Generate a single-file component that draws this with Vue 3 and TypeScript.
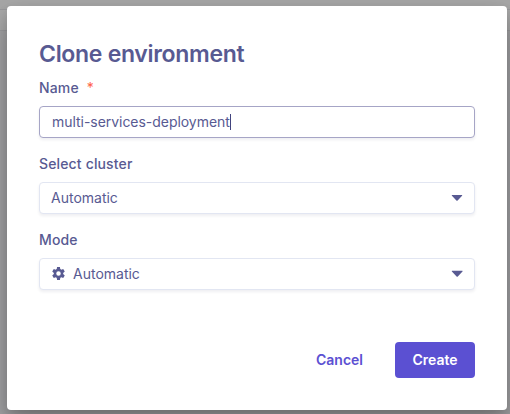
<script setup lang="ts">
import { ref } from 'vue'

const name = ref<string>('multi-services-deployment')
</script>

<template>
  <div class="page">
    <div class="band band-top"></div>
    <div class="band band-bar"></div>
    <div class="overlay">
      <form class="modal" @submit.prevent>
        <h1 class="title">Clone environment</h1>

        <div class="field">
          <div class="label">Name<span class="required">*</span></div>
          <div class="control focused">
            <span class="value">{{ name }}</span><span class="caret"></span>
          </div>
        </div>

        <div class="field">
          <div class="label">Select cluster</div>
          <div class="control select">
            <span class="value">Automatic</span>
            <svg class="arrow" width="12" height="8" viewBox="0 0 12 8">
              <path d="M1.300 1h9.400c.5 0 .7.5.4.8L6.600 6.500c-.3.4-.9.4-1.200 0L.9 1.800C.6 1.500.8 1 1.300 1z" />
            </svg>
          </div>
        </div>

        <div class="field">
          <div class="label">Mode</div>
          <div class="control select">
            <svg class="gear" width="15" height="15" viewBox="0 0 24 24">
              <path fill-rule="evenodd" d="M19.430 12.980c.04-.32.07-.64.07-.98s-.03-.66-.07-.98l2.600-2.030-2.500-4.330-3.060 1.230a7.300 7.300 0 0 0-1.690-.98L14.300 1.600H9.700l-.48 3.310c-.61.25-1.170.59-1.690.98L4.470 4.660l-2.500 4.330 2.600 2.030a8 8 0 0 0 0 1.960l-2.600 2.030 2.500 4.330 3.060-1.230c.52.4 1.080.73 1.690.98l.48 3.310h4.600l.48-3.310c.61-.25 1.170-.59 1.690-.98l3.060 1.230 2.500-4.330zM12 15.600a3.600 3.600 0 1 1 0-7.200 3.600 3.600 0 0 1 0 7.200z" />
            </svg>
            <span class="value">Automatic</span>
            <svg class="arrow" width="12" height="8" viewBox="0 0 12 8">
              <path d="M1.300.8h9.800c.5 0 .7.5.4.8L6.800 6.500c-.3.4-.9.4-1.200 0L.9 1.600C.6 1.300.8.8 1.300.8z" />
            </svg>
          </div>
        </div>

        <div class="actions">
          <button class="cancel" type="button">Cancel</button>
          <button class="create" type="submit">Create</button>
        </div>
      </form>
    </div>
  </div>
</template>

<style>
body {
  overflow: hidden;
}
</style>

<style scoped>
.page {
  position: relative;
  width: 510px;
  height: 414px;
  overflow: hidden;
  background: #a2a2a4;
  font-family: Inter, "Liberation Sans", sans-serif;
  color: #585a92;
}
.band {
  box-sizing: border-box;
  border-bottom: 1px solid #99999c;
}
.band-top {
  height: 10px;
  background: #a6a6a6;
}
.band-bar {
  height: 21px;
  background: #a8a8a8;
}
.overlay {
  position: absolute;
  inset: 0;
  padding: 6px 3px 4px 7px;
}
.modal {
  box-sizing: border-box;
  height: 404px;
  padding: 32px;
  display: flex;
  flex-direction: column;
  background: #fff;
  border-radius: 4px;
  box-shadow: 0 14px 28px rgba(0, 0, 0, 0.25), 0 6px 12px rgba(0, 0, 0, 0.12);
}
.title {
  margin: 0 0 8px;
  font-size: 23px;
  line-height: 32px;
  font-weight: 600;
  letter-spacing: -0.3px;
  white-space: nowrap;
}
.field {
  height: 76px;
}
.label {
  height: 28px;
  font-size: 14px;
  line-height: 20px;
  font-weight: 500;
  letter-spacing: 0.15px;
}
.required {
  margin-left: 8px;
  font-weight: 400;
  color: #ff6248;
}
.control {
  box-sizing: border-box;
  height: 32px;
  padding: 0 11px;
  display: flex;
  align-items: center;
  border: 1px solid #e2e6f2;
  border-radius: 4px;
  background: #fff;
  box-shadow: 0 2px 3px rgba(30, 35, 70, 0.07);
  font-size: 14px;
}
.value {
  padding-bottom: 2px;
}
.focused {
  padding-left: 12px;
  border-color: #a6a5c6;
  letter-spacing: -0.04px;
}
.caret {
  width: 1px;
  height: 16px;
  background: #42447e;
}
.gear {
  margin-right: 7px;
  margin-bottom: 1px;
  fill: #585a92;
}
.arrow {
  margin-left: auto;
  fill: #585a92;
}
.actions {
  margin-top: auto;
  display: flex;
  justify-content: flex-end;
  gap: 16px;
}
button {
  height: 36px;
  padding: 0 0 2px;
  border: 0;
  border-radius: 4px;
  background: none;
  font: 600 14px Inter, sans-serif;
  color: #5b50d2;
}
.cancel {
  width: 79px;
}
.create {
  width: 80px;
  background: #5b50d2;
  color: #fff;
}
</style>
